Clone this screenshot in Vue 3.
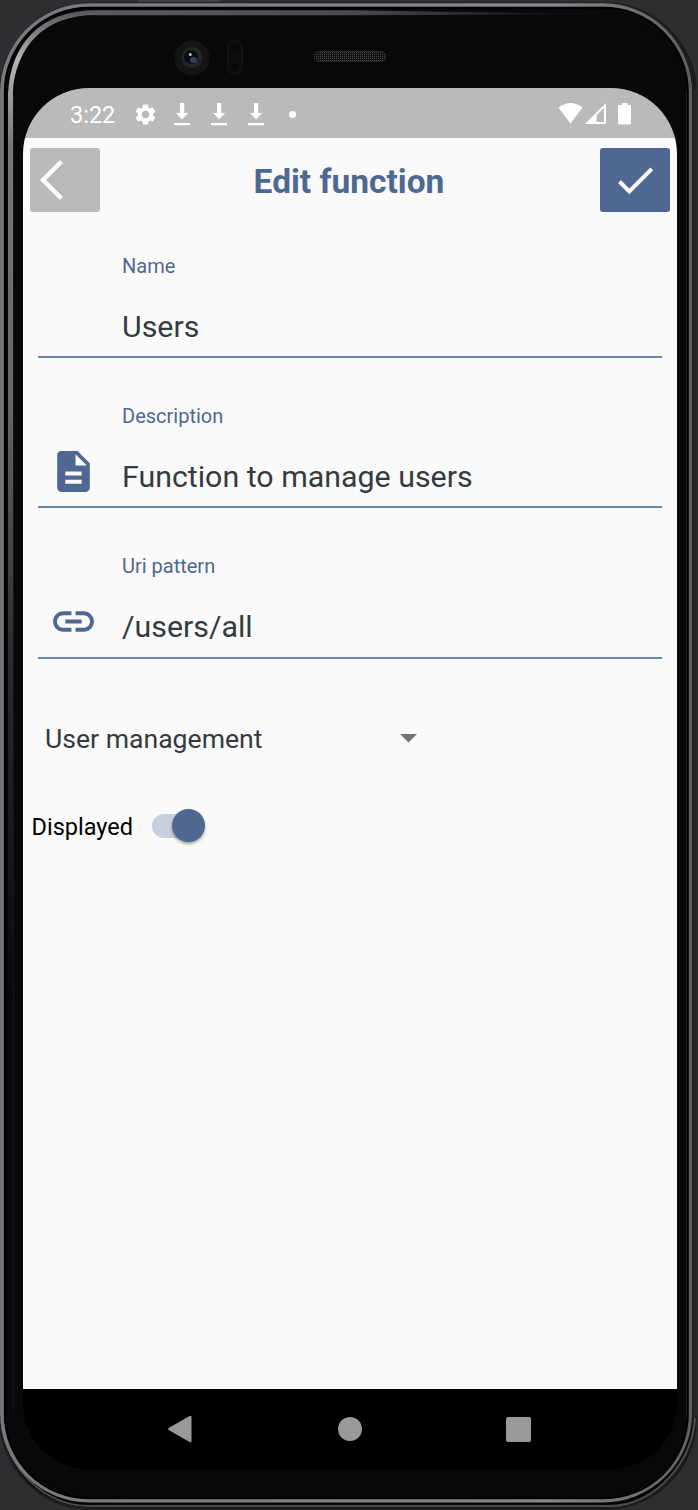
<script setup>
const fields = [
  { label: 'Name', value: 'Users', icon: '' },
  { label: 'Description', value: 'Function to manage users', icon: 'document' },
  { label: 'Uri pattern', value: '/users/all', icon: 'link' },
]
</script>

<template>
  <div class="device">
    <svg class="frame" viewBox="0 0 698 1510" width="698" height="1510" fill="none">
      <defs>
        <linearGradient id="rim" x1="0" y1="0" x2="1" y2="0">
          <stop offset="0" stop-color="#77797d" />
          <stop offset=".8" stop-color="#85878a" />
          <stop offset="1" stop-color="#5e5f60" />
        </linearGradient>
        <linearGradient id="band" gradientUnits="userSpaceOnUse" x1="0" y1="10" x2="0" y2="1000">
          <stop offset="0" stop-color="#555" />
          <stop offset=".05" stop-color="#b4b4b4" />
          <stop offset=".14" stop-color="#777" />
          <stop offset=".4" stop-color="#666764" />
          <stop offset=".65" stop-color="#2b2c2d" />
          <stop offset="1" stop-color="#08080a" />
        </linearGradient>
        <linearGradient id="topband" gradientUnits="userSpaceOnUse" x1="90" y1="0" x2="600" y2="0">
          <stop offset="0" stop-color="#5c5c5c" />
          <stop offset=".5" stop-color="#4c4c4c" />
          <stop offset="1" stop-color="#08080a" />
        </linearGradient>
        <pattern id="mesh" width="2" height="2" patternUnits="userSpaceOnUse">
          <rect width="2" height="2" fill="#111" />
          <rect width="1" height="1" fill="#484848" />
        </pattern>
      </defs>
      <rect width="698" height="1510" fill="#2d2e30" />
      <rect x="138" width="82" height="2" fill="#403d43" />
      <rect x="-1" y="2" width="698" height="1508" rx="92" fill="#1b1c1e" />
      <rect x="1" y="3" width="692" height="1505" rx="89" fill="#050506" stroke="#27282a" />
      <path d="M2 1425C8 1470 45 1506 90 1506H610C655 1506 695 1460 695 1415" stroke="#4c4c4e" stroke-width="2" />
      <rect x="2.200" y="5.300" width="687.800" height="1495" rx="87" fill="#09090b" stroke="url(#rim)" stroke-width="4.200" />
      <rect x="4.800" y="7.800" width="683" height="1490.500" rx="84" fill="#09090b" stroke="#000" stroke-width="2" />
      <path d="M10.500 1000V94C13 45 42 12.800 96 12.800" stroke="url(#band)" stroke-width="5" />
      <path d="M96 10.300L350 10.300L600 14L350 15.500H96Z" fill="url(#topband)" />
      <rect x="13" y="15.500" width="673" height="1481.500" rx="78" fill="#08080a" />
      <path d="M13.500 96V1412" stroke="#161416" />
      <path d="M686.500 90V1418" stroke="#1c1c1d" />
      <path d="M695.500 90V1418" stroke="#252729" stroke-width="4" />
      <circle cx="192" cy="58" r="17.500" fill="#131414" />
      <circle cx="192" cy="57.500" r="10.500" fill="#242527" />
      <circle cx="191" cy="57" r="7" fill="#0b0c11" />
      <ellipse cx="193.500" cy="60" rx="3.500" ry="3" fill="#35415f" />
      <circle cx="190.300" cy="54.500" r="1.600" fill="#b5b5b5" />
      <rect x="227.500" y="40.500" width="15" height="34" rx="7.500" fill="#0d0d0e" stroke="#161617" />
      <circle cx="235" cy="47.500" r="5" fill="#080809" stroke="#101011" />
      <circle cx="235" cy="67" r="5" fill="#080809" stroke="#101011" />
      <rect x="314" y="51.500" width="72" height="10" rx="5" fill="url(#mesh)" stroke="#242424" />
    </svg>

    <div class="screen">
      <div class="status">
        <span class="time">3:22</span>
        <svg class="gear" width="25" height="25" viewBox="0 0 24 24" fill="#fff">
          <path d="M19.14 12.94c.04-.3.06-.61.06-.94 0-.32-.02-.64-.07-.94l2.03-1.58c.18-.14.23-.41.12-.61l-1.92-3.32c-.12-.22-.37-.29-.59-.22l-2.39.96c-.5-.38-1.03-.7-1.62-.94L14.4 2.81c-.04-.24-.24-.41-.48-.41h-3.84c-.24 0-.43.17-.47.41l-.36 2.54c-.59.24-1.13.57-1.62.94l-2.39-.96c-.22-.08-.47 0-.59.22L2.74 8.87c-.12.21-.08.47.12.61l2.03 1.58c-.05.3-.09.63-.09.94s.02.64.07.94l-2.03 1.58c-.18.14-.23.41-.12.61l1.92 3.32c.12.22.37.29.59.22l2.39-.96c.5.38 1.03.7 1.62.94l.36 2.54c.05.24.24.41.48.41h3.84c.24 0 .44-.17.47-.41l.36-2.54c.59-.24 1.13-.56 1.62-.94l2.39.96c.22.08.47 0 .59-.22l1.92-3.32c.12-.22.07-.47-.12-.61l-2.01-1.58zM12 15.6c-1.98 0-3.6-1.62-3.6-3.6s1.62-3.6 3.6-3.6 3.6 1.62 3.6 3.6-1.62 3.6-3.6 3.6z" />
        </svg>
        <svg v-for="n in 3" :key="n" class="download" width="16" height="23" viewBox="0 0 16 23" fill="#fff">
          <path d="M6 0H10.200V10H14.200L8.100 16.500 2 10H6ZM0 20H16V22.300H0Z" />
        </svg>
        <i class="dot"></i>
        <svg class="signals" width="75" height="24" viewBox="0 0 75 24" fill="#fff">
          <path d="M.5 5.500Q12.500-3.500 24.500 5.500L12.500 21.500Z" />
          <path fill-rule="evenodd" d="M48 1V22H27ZM46 5.800L38.500 13.300V20H46Z" />
          <path d="M64 1H69.500V3H72Q73 3 73 4V21Q73 22.500 71.500 22.500H61.500Q60 22.500 60 21V4Q60 3 61 3H64Z" />
        </svg>
      </div>

      <header class="header">
        <button class="btn back" aria-label="Back">
          <svg width="70" height="64" viewBox="0 0 70 64" fill="none" stroke="#fafafa" stroke-width="4.500">
            <path d="M32.500 13.500L14 32L32.500 50.500" />
          </svg>
        </button>
        <h1>Edit function</h1>
        <button class="btn save" aria-label="Save">
          <svg width="70" height="64" viewBox="0 0 70 64" fill="none" stroke="#fafafa" stroke-width="4">
            <path d="M19.500 33.500L29.300 43.300L51.800 20.800" />
          </svg>
        </button>
      </header>

      <main>
        <div v-for="f in fields" :key="f.label" class="field">
          <div class="icon">
            <svg v-if="f.icon === 'document'" width="49" height="49" viewBox="0 0 24 24" fill="#4f6891">
              <path d="M14 2H6c-1.100 0-1.990.9-1.990 2L4 20c0 1.100.89 2 1.990 2H18c1.100 0 2-.9 2-2V8l-6-6zm2 16H8v-2h8v2zm0-4H8v-2h8v2zm-3-5V3.500L18.500 9H13z" />
            </svg>
            <svg v-else-if="f.icon === 'link'" width="49" height="49" viewBox="0 0 24 24" fill="#4f6891">
              <path d="M3.900 12c0-1.710 1.390-3.100 3.100-3.100h4V7H7c-2.760 0-5 2.240-5 5s2.240 5 5 5h4v-1.900H7c-1.710 0-3.100-1.390-3.100-3.100zM8 13h8v-2H8v2zm9-6h-4v1.900h4c1.710 0 3.100 1.390 3.100 3.100s-1.390 3.100-3.100 3.100h-4V17h4c2.760 0 5-2.240 5-5s-2.240-5-5-5z" />
            </svg>
          </div>
          <div class="text">
            <label>{{ f.label }}</label>
            <span class="value">{{ f.value }}</span>
          </div>
        </div>

        <div class="select">
          <span>User management</span>
          <svg width="17" height="9" viewBox="0 0 17 9" fill="#727272"><path d="M0 0H17L8.500 8.500Z" /></svg>
        </div>

        <div class="toggle">
          <span>Displayed</span>
          <div class="track"><i class="thumb"></i></div>
        </div>
      </main>

      <nav class="nav">
        <svg width="24" height="28" viewBox="0 0 24 28" fill="#999"><path d="M.6 13Q-.4 14 .6 15L21.600 27Q23.500 28 23.500 26V2Q23.500 0 21.600 1Z" /></svg>
        <svg class="home" width="24" height="24" viewBox="0 0 24 24" fill="#999"><circle cx="12" cy="12" r="12" /></svg>
        <svg width="25" height="25" viewBox="0 0 25 25" fill="#999"><rect width="25" height="25" rx="2" /></svg>
      </nav>
    </div>
  </div>
</template>

<style>
body { background: #2d2e30; }
</style>

<style scoped>
.device {
  position: relative;
  box-sizing: border-box;
  width: 698px;
  height: 1510px;
  padding: 88px 21px 41px 23px;
  overflow: hidden;
  font-family: Roboto, "Liberation Sans", sans-serif;
}
svg { display: block; flex: none; }
.frame { position: absolute; left: 0; top: 0; }
.screen {
  position: relative;
  display: flex;
  flex-direction: column;
  width: 654px;
  height: 1381px;
  overflow: hidden;
  border-radius: 66px;
  background: #000;
}
.status {
  flex: none;
  display: flex;
  align-items: center;
  box-sizing: border-box;
  height: 50px;
  padding: 2px 44px 0 47px;
  background: #bababa;
  color: #fff;
}
.time { width: 62.5px; font-size: 23.5px; line-height: 28px; padding-top: 2px; }
.gear { margin-right: 16.5px; }
.download { margin-right: 21px; }
.dot { width: 7px; height: 7px; border-radius: 50%; background: #fff; margin-left: 4px; }
.signals { margin-left: auto; }
.header {
  flex: none;
  display: flex;
  align-items: center;
  justify-content: space-between;
  height: 64px;
  padding: 10px 7px 0;
  background: #fafafa;
}
.btn { width: 70px; height: 64px; padding: 0; border: 0; border-radius: 3px; }
.back { background: #bababa; }
.back svg { margin-left: -1px; }
.save { background: #4f6891; }
h1 { margin: 0 2px 0 0; padding-top: 4px; font-size: 33.5px; line-height: 40px; font-weight: 700; color: #4f6891; white-space: nowrap; }
main { flex: 1; padding: 0 15px; background: #fafafa; }
.field {
  display: flex;
  box-sizing: border-box;
  height: 150.3px;
  border-bottom: 2px solid #6c84ad;
}
.field:first-child { height: 146px; }
.field:first-child .text { padding-top: 42px; }
.icon { width: 84px; padding: 89px 0 0 10.5px; box-sizing: border-box; }
.text { display: flex; flex-direction: column; padding-top: 46px; }
label { font-size: 20px; line-height: 24px; color: #4f6891; }
.value { margin-top: 31px; font-size: 30.35px; line-height: 36px; color: #343a40; white-space: nowrap; }
.select {
  display: flex;
  align-items: center;
  justify-content: space-between;
  width: 371.5px;
  margin: 64px 0 0 7px;
  height: 32px;
  font-size: 26.6px;
  color: #343a40;
}
.toggle { display: flex; align-items: center; gap: 19px; margin: 54px 0 0 -6.5px; height: 34px; font-size: 23.5px; color: #000; }
.toggle span { padding-top: 2px; }
.track { display: flex; align-items: center; justify-content: flex-end; width: 53px; height: 24px; border-radius: 12px; background: #c8d0de; }
.thumb { flex: none; width: 33px; height: 33px; border-radius: 50%; background: #4f6891; box-shadow: 0 2px 3px rgba(0, 0, 0, .35); }
.nav {
  flex: none;
  display: flex;
  align-items: center;
  justify-content: space-between;
  height: 80px;
  padding: 0 146px 0 145px;
  background: #000;
}
.home { margin-left: 1px; }
</style>
